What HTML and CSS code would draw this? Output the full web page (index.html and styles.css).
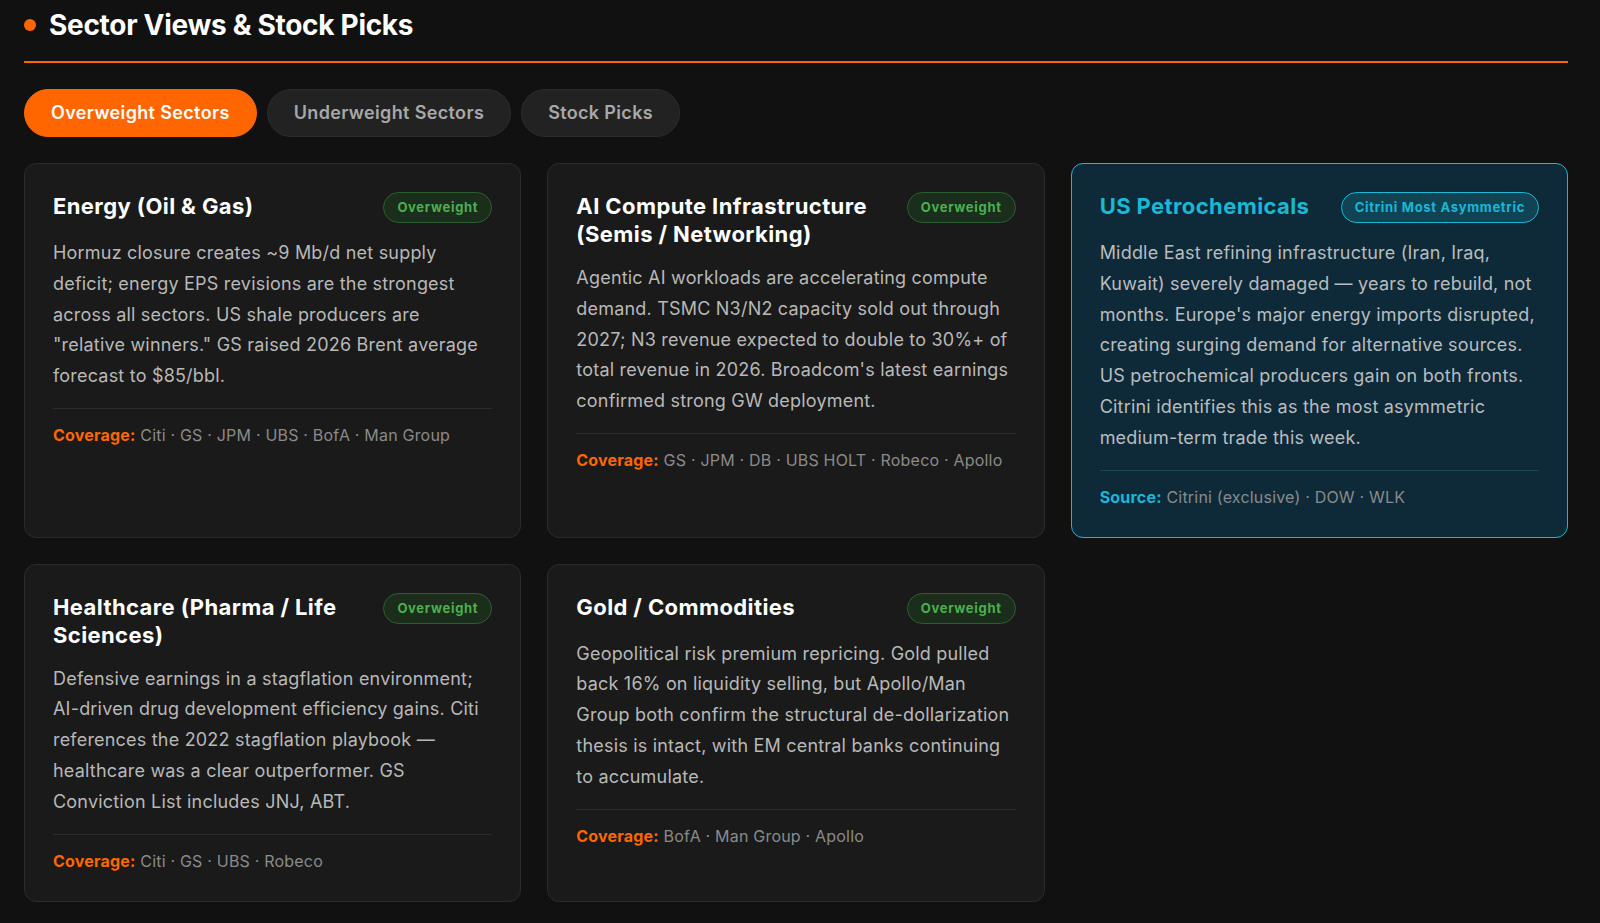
FILE: index.html
```html
<!DOCTYPE html>
<html lang="en">
<head>
  <meta charset="UTF-8">
  <meta name="viewport" content="width=device-width, initial-scale=1.0">
  <title>Sector Views &amp; Stock Picks</title>
  <link rel="stylesheet" href="styles.css">
</head>
<body>

<section class="sector-views">
  <header class="section-head">
    <span class="dot"></span>
    <h2>Sector Views &amp; Stock Picks</h2>
  </header>

  <div class="tabs">
    <button class="tab active">Overweight Sectors</button>
    <button class="tab">Underweight Sectors</button>
    <button class="tab">Stock Picks</button>
  </div>

  <div class="card-grid">
    <article class="card">
      <div class="card-head">
        <h3>Energy (Oil &amp; Gas)</h3>
        <span class="badge">Overweight</span>
      </div>
      <p class="card-body">Hormuz closure creates ~9 Mb/d net supply deficit; energy EPS revisions are the strongest across all sectors. US shale producers are "relative winners." GS raised 2026 Brent average forecast to $85/bbl.</p>
      <div class="card-foot"><b>Coverage:</b> Citi · GS · JPM · UBS · BofA · Man Group</div>
    </article>

    <article class="card">
      <div class="card-head">
        <h3>AI Compute Infrastructure (Semis / Networking)</h3>
        <span class="badge">Overweight</span>
      </div>
      <p class="card-body">Agentic AI workloads are accelerating compute demand. TSMC N3/N2 capacity sold out through 2027; N3 revenue expected to double to 30%+ of total revenue in 2026. Broadcom's latest earnings confirmed strong GW deployment.</p>
      <div class="card-foot"><b>Coverage:</b> GS · JPM · DB · UBS HOLT · Robeco · Apollo</div>
    </article>

    <article class="card highlight">
      <div class="card-head">
        <h3>US Petrochemicals</h3>
        <span class="badge">Citrini Most Asymmetric</span>
      </div>
      <p class="card-body">Middle East refining infrastructure (Iran, Iraq, Kuwait) severely damaged — years to rebuild, not months. Europe's major energy imports disrupted, creating surging demand for alternative sources. US petrochemical producers gain on both fronts. Citrini identifies this as the most asymmetric medium-term trade this week.</p>
      <div class="card-foot"><b>Source:</b> Citrini (exclusive) · DOW · WLK</div>
    </article>

    <article class="card">
      <div class="card-head">
        <h3>Healthcare (Pharma / Life Sciences)</h3>
        <span class="badge">Overweight</span>
      </div>
      <p class="card-body">Defensive earnings in a stagflation environment; AI-driven drug development efficiency gains. Citi references the 2022 stagflation playbook — healthcare was a clear outperformer. GS Conviction List includes JNJ, ABT.</p>
      <div class="card-foot"><b>Coverage:</b> Citi · GS · UBS · Robeco</div>
    </article>

    <article class="card">
      <div class="card-head">
        <h3>Gold / Commodities</h3>
        <span class="badge">Overweight</span>
      </div>
      <p class="card-body">Geopolitical risk premium repricing. Gold pulled back 16% on liquidity selling, but Apollo/Man Group both confirm the structural de-dollarization thesis is intact, with EM central banks continuing to accumulate.</p>
      <div class="card-foot"><b>Coverage:</b> BofA · Man Group · Apollo</div>
    </article>
  </div>
</section>

</body>
</html>
```

FILE: styles.css
```css
body {
  margin: 0;
  background: #111111;
  color: #ffffff;
  font-family: Inter, "Noto Sans", "Liberation Sans", sans-serif;
}

.sector-views {
  padding: 8px 32px 24px 24px;
}

/* section title */
.section-head {
  display: flex;
  align-items: center;
  gap: 13px;
  padding-bottom: 19px;
  border-bottom: 2px solid #ff6600;
}
.dot {
  width: 12px;
  height: 12px;
  border-radius: 50%;
  background: #ff6600;
}
.section-head h2 {
  margin: 0;
  font-size: 28px;
  line-height: 34px;
  font-weight: 700;
  letter-spacing: -0.3px;
}

/* tabs */
.tabs {
  display: flex;
  gap: 10px;
  margin-top: 26px;
}
.tab {
  font-family: inherit;
  font-size: 18px;
  line-height: 22px;
  font-weight: 600;
  letter-spacing: 0.35px;
  padding: 12px 26px;
  border-radius: 999px;
  border: 1px solid #2c2c2c;
  background: #222222;
  color: #a8a8a8;
  cursor: pointer;
}
.tab.active {
  background: #ff6600;
  border-color: #ff6600;
  color: #ffffff;
}

/* cards */
.card-grid {
  display: grid;
  grid-template-columns: repeat(3, 1fr);
  gap: 26px;
  margin-top: 26px;
}
.card {
  background: #1a1a1a;
  border: 1px solid #2b2b2b;
  border-radius: 12px;
  padding: 28px;
}
.card-head {
  display: flex;
  justify-content: space-between;
  align-items: flex-start;
  gap: 16px;
}
.card-head h3 {
  margin: 0;
  font-size: 22px;
  line-height: 28px;
  font-weight: 700;
  letter-spacing: 0.4px;
  color: #ffffff;
}
.badge {
  flex-shrink: 0;
  font-size: 13px;
  line-height: 17px;
  font-weight: 700;
  letter-spacing: 0.7px;
  padding: 6px 13px;
  border-radius: 999px;
  color: #4caf50;
  background: #1b2e1c;
  border: 1px solid #2d5e30;
}
.card-body {
  margin: 15px 0 16px;
  font-size: 18px;
  line-height: 30.8px;
  letter-spacing: 0.2px;
  color: #b8b8b8;
}
.card-foot {
  border-top: 1px solid #2c2c2c;
  padding-top: 14px;
  font-size: 16px;
  line-height: 24px;
  letter-spacing: 0.2px;
  color: #8a8a8a;
}
.card-foot b {
  color: #ff6600;
  font-weight: 700;
}

/* highlighted card */
.card.highlight {
  background: #0e2a38;
  border: 1.5px solid #1ab8d4;
}
.card.highlight h3 {
  color: #1ab8d4;
}
.card.highlight .badge {
  color: #1ab8d4;
  background: #104454;
  border-color: #1ab8d4;
}
.card.highlight .card-body {
  color: #b8bcbf;
}
.card.highlight .card-foot {
  border-top-color: #1d4656;
}
.card.highlight .card-foot b {
  color: #1ab8d4;
}
```
